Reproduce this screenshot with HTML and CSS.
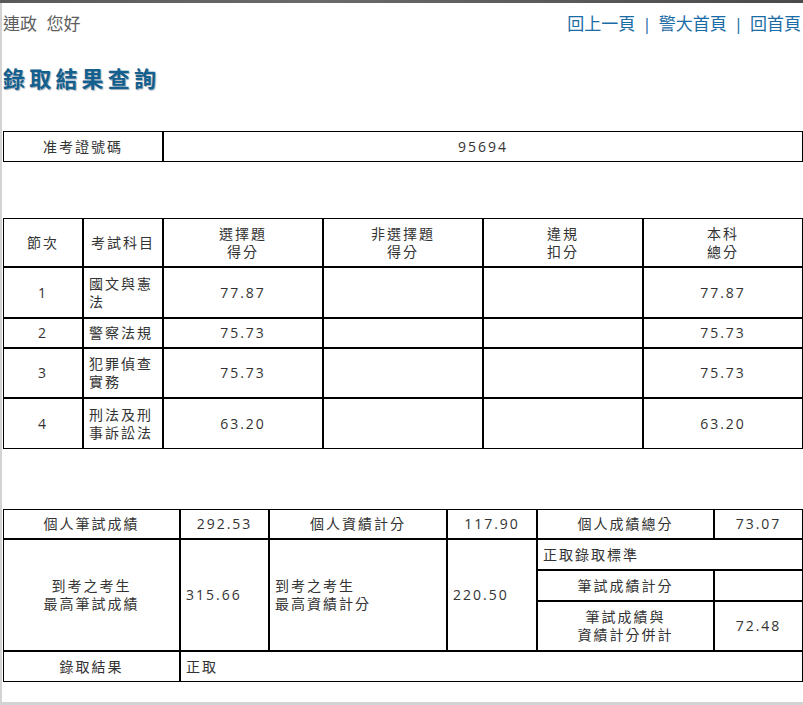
FILE: index.html
```html
<!DOCTYPE html>
<html lang="zh-Hant">
<head>
    <meta charset="UTF-8">
    <meta name="viewport" content="width=device-width, initial-scale=1.0">
    <title>錄取結果查詢</title>
    <link rel="stylesheet" href="styles.css">
</head>
<body>
    <div class="topbar"></div>
    <div class="page">
        <div class="header">
            <span class="greeting">連政 您好</span>
            <div class="nav">
                <a href="#">回上一頁</a><span class="sep">|</span><a href="#">警大首頁</a><span class="sep">|</span><a href="#">回首頁</a>
            </div>
        </div>

        <h1>錄取結果查詢</h1>

        <table class="grid id-table">
            <colgroup>
                <col style="width: 160px">
                <col style="width: 640px">
            </colgroup>
            <tr class="h31">
                <td>准考證號碼</td>
                <td>95694</td>
            </tr>
        </table>

        <table class="grid score-table">
            <colgroup>
                <col style="width: 80px">
                <col style="width: 80px">
                <col style="width: 160px">
                <col style="width: 160px">
                <col style="width: 160px">
                <col style="width: 160px">
            </colgroup>
            <tr class="h49">
                <td>節次</td>
                <td>考試科目</td>
                <td>選擇題<br>得分</td>
                <td>非選擇題<br>得分</td>
                <td>違規<br>扣分</td>
                <td>本科<br>總分</td>
            </tr>
            <tr class="h51">
                <td>1</td>
                <td class="left">國文與憲法</td>
                <td>77.87</td>
                <td></td>
                <td></td>
                <td>77.87</td>
            </tr>
            <tr class="h30">
                <td>2</td>
                <td class="left">警察法規</td>
                <td>75.73</td>
                <td></td>
                <td></td>
                <td>75.73</td>
            </tr>
            <tr class="h50">
                <td>3</td>
                <td class="left">犯罪偵查實務</td>
                <td>75.73</td>
                <td></td>
                <td></td>
                <td>75.73</td>
            </tr>
            <tr class="h51">
                <td>4</td>
                <td class="left">刑法及刑事訴訟法</td>
                <td>63.20</td>
                <td></td>
                <td></td>
                <td>63.20</td>
            </tr>
        </table>

        <table class="grid total-table">
            <colgroup>
                <col style="width: 177px">
                <col style="width: 89px">
                <col style="width: 178px">
                <col style="width: 90px">
                <col style="width: 177px">
                <col style="width: 89px">
            </colgroup>
            <tr class="h30">
                <td>個人筆試成績</td>
                <td>292.53</td>
                <td>個人資績計分</td>
                <td>117.90</td>
                <td>個人成績總分</td>
                <td>73.07</td>
            </tr>
            <tr class="h31">
                <td rowspan="3">到考之考生<br>最高筆試成績</td>
                <td rowspan="3" class="left">315.66</td>
                <td rowspan="3" class="left">到考之考生<br>最高資績計分</td>
                <td rowspan="3" class="left">220.50</td>
                <td colspan="2" class="left">正取錄取標準</td>
            </tr>
            <tr class="h31">
                <td>筆試成績計分</td>
                <td></td>
            </tr>
            <tr class="h50">
                <td>筆試成績與<br>資績計分併計</td>
                <td>72.48</td>
            </tr>
            <tr class="h31">
                <td>錄取結果</td>
                <td colspan="5" class="left">正取</td>
            </tr>
        </table>
    </div>
</body>
</html>
```

FILE: styles.css
```css
* {
    margin: 0;
    padding: 0;
    box-sizing: border-box;
}

body {
    background: #d3d3d3;
    font-family: 'Open Sans', 'Noto Sans CJK TC', sans-serif;
    color: #333;
    height: 705px;
    overflow: hidden;
}

.topbar {
    height: 3px;
    background: linear-gradient(90deg, #5a5a5a, #6a6a6a 40%, #4a4a4a);
}

.page {
    background: #fff;
    margin-left: 2px;
    height: 699px;
    padding: 9px 0 0 1px;
}

.header {
    display: flex;
    justify-content: space-between;
    align-items: center;
    height: 24px;
    font-size: 17px;
    line-height: 24px;
}

.greeting {
    color: #5e5e5e;
    word-spacing: 5px;
}

.nav {
    padding-right: 2px;
}

.nav a {
    color: #1a6ca6;
    text-decoration: none;
}

.nav .sep {
    color: #1a6ca6;
    margin: 0 7px;
}

h1 {
    margin-top: 27px;
    font-size: 22px;
    line-height: 30px;
    font-weight: 700;
    letter-spacing: 4.2px;
    color: #13608f;
    text-shadow: 1px 1px 1px rgba(0, 40, 70, 0.4);
}

.grid {
    table-layout: fixed;
    width: 800px;
    border-collapse: separate;
    border-spacing: 0;
    font-size: 14px;
    line-height: 18px;
    letter-spacing: 2px;
}

.grid td {
    border: 1px solid #000;
    padding: 0 5px;
    text-align: center;
    vertical-align: middle;
}

.grid td.left {
    text-align: left;
}

.id-table {
    margin-top: 38px;
}

.score-table {
    margin-top: 56px;
}

.total-table {
    margin-top: 60px;
}

.h30 { height: 30px; }
.h31 { height: 31px; }
.h49 { height: 49px; }
.h50 { height: 50px; }
.h51 { height: 51px; }
```
